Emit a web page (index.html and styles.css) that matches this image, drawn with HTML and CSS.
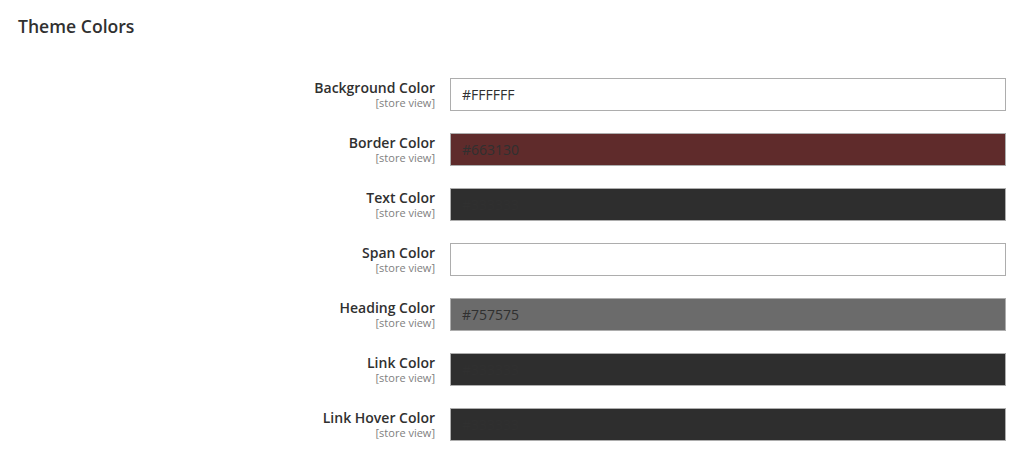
FILE: index.html
```html
<!DOCTYPE html>
<html>
<head>
  <meta charset="UTF-8">
  <link rel="stylesheet" href="styles.css">
</head>
<body>
  <div class="section">
    <h2 class="section-title">Theme Colors</h2>

    <div class="fields">
      <div class="field">
        <div class="label"><span>Background Color</span><small>[store view]</small></div>
        <input class="color-input" type="text" value="#FFFFFF">
      </div>
      <div class="field">
        <div class="label"><span>Border Color</span><small>[store view]</small></div>
        <input class="color-input swatch-border" type="text" value="#663130">
      </div>
      <div class="field">
        <div class="label"><span>Text Color</span><small>[store view]</small></div>
        <input class="color-input swatch-dark" type="text" value="#333333">
      </div>
      <div class="field">
        <div class="label"><span>Span Color</span><small>[store view]</small></div>
        <input class="color-input" type="text" value="">
      </div>
      <div class="field">
        <div class="label"><span>Heading Color</span><small>[store view]</small></div>
        <input class="color-input swatch-grey" type="text" value="#757575">
      </div>
      <div class="field">
        <div class="label"><span>Link Color</span><small>[store view]</small></div>
        <input class="color-input swatch-dark" type="text" value="#333333">
      </div>
      <div class="field">
        <div class="label"><span>Link Hover Color</span><small>[store view]</small></div>
        <input class="color-input swatch-dark" type="text" value="#333333">
      </div>
    </div>
  </div>
</body>
</html>
```

FILE: styles.css
```css
* {
  box-sizing: border-box;
  margin: 0;
  padding: 0;
}

body {
  font-family: 'Open Sans', 'Liberation Sans', sans-serif;
  background: #ffffff;
  color: #303030;
  min-height: 100vh;
}

.section {
  padding: 15px 21px 0 18px;
}

.section-title {
  font-size: 17.6px;
  font-weight: 600;
  line-height: 22px;
  color: #303030;
  margin-bottom: 41px;
}

.fields {
  display: flex;
  flex-direction: column;
  gap: 22px;
}

.field {
  display: grid;
  grid-template-columns: 417px 1fr;
  gap: 15px;
}

.label {
  display: flex;
  flex-direction: column;
  align-items: flex-end;
  text-align: right;
}

.label span {
  font-size: 14px;
  font-weight: 600;
  line-height: 19px;
  color: #303030;
}

.label small {
  font-size: 11px;
  line-height: 12px;
  color: #808080;
}

.color-input {
  height: 33px;
  width: 100%;
  border: 1px solid #adadad;
  background: #ffffff;
  padding: 0 11px;
  font-family: inherit;
  font-size: 14px;
  color: #303030;
  outline: none;
}

.swatch-border {
  background: #5f2b2b;
}

.swatch-dark {
  background: #2e2e2e;
}

.swatch-grey {
  background: #6b6b6b;
}
```
